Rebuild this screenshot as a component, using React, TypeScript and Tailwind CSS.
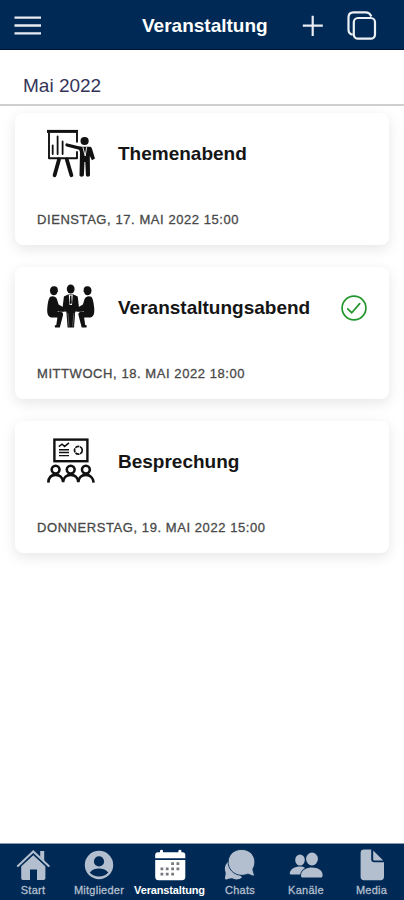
import type { ReactNode } from "react";

const PresentationIcon = () => (
  <svg width="48" height="50" viewBox="0 0 48 50" fill="none" stroke="#111" strokeLinecap="round" strokeLinejoin="round">
    <path d="M0 2.4H31" strokeWidth="3" strokeLinecap="butt" />
    <path d="M2 3.5V29.2H30V22.3M30 3.5V13.5" strokeWidth="1.9" strokeLinecap="butt" />
    <path d="M5.7 16.5V25M10.6 7.5V25M15.6 12.5V25" strokeWidth="1.8" />
    <path d="M12 30.5L7.6 46.3M19.8 30.5L24.4 46.3" strokeWidth="3.8" />
    <path d="M20 16L34.5 19.6" strokeWidth="3.3" />
    <circle cx="37.6" cy="12" r="4.1" fill="#111" stroke="none" />
    <path d="M31 17.7H42.5C43.8 17.7 44.5 18.3 44.9 19.5L48 29.5L45 31.2L42.8 27L43 46.3C43 48.2 38.9 48.2 38.9 46.3L38.3 33H37.5L36.9 46.3C36.8 48.2 32.4 48.2 32.5 46.3L33 23Z" fill="#111" stroke="none" />
    <path d="M36 18.5L38.2 27L39.6 18.5" stroke="#fff" strokeWidth="0.9" />
  </svg>
);

const SeatedPerson = () => (
  <>
    <path d="M6.7 3.3C9.8 3 11.1 5.1 10.8 7.4C11.2 8.5 10.9 8.8 10.4 9C10 11.2 8.7 12.3 6.8 12.3C4.2 12.3 3 9.8 3 7.6C3 4.9 4.5 3.4 6.7 3.3Z" />
    <path d="M3.3 13.7C5.8 12.5 8.8 13.3 9.8 15.8L11.6 21.4L18 25.3L16.8 28.4H10.3L11 29H14.2C16 29.2 16.5 31 15.8 33L12.8 44.5H8L7.7 42.6L9.3 42L10.4 34.4H4C.3 33.6 -.2 29.5 .4 24C.9 19 1.8 14.9 3.3 13.7Z" />
  </>
);

const MeetingIcon = () => (
  <svg width="48" height="50" viewBox="0 0 48 50" fill="#111">
    <SeatedPerson />
    <g transform="translate(47.5 0) scale(-1 1)">
      <SeatedPerson />
    </g>
    <ellipse cx="23.7" cy="6" rx="3.9" ry="4.6" />
    <path d="M21 11.4H26.5L30.7 13.5L32 24.5L28.3 27.5H19L15.6 24.5L16.9 13.5Z" />
    <path d="M12 26.2H35.5V28.6H12Z" />
    <path d="M19.3 28L20.6 44.6H27L28.3 28Z" />
    <path d="M21.8 12L22.5 22H25L25.7 12Z" fill="#fff" />
    <path d="M23.1 12.4H24.4L24.8 20L23.7 21.5L22.7 20Z" />
    <path d="M20.8 30L22.1 43.5M26.9 30L25.6 43.5" stroke="#888" strokeWidth=".6" />
  </svg>
);

const BriefingIcon = () => (
  <svg width="48" height="50" viewBox="0 0 48 50" fill="none" stroke="#111">
    <rect x="7.4" y="2.6" width="33" height="21.6" strokeWidth="2.4" />
    <path d="M11.8 9.6L15 7.2L17.6 9.4L22 5.8" strokeWidth="1.5" />
    <path d="M12 12.7H22M12 15.5H22M12 18.6H22" strokeWidth="1.4" />
    <circle cx="31.4" cy="13.3" r="3.9" strokeWidth="1.7" strokeDasharray="4.2 .7" />
    <g strokeWidth="2.6">
      <circle cx="8.6" cy="32.6" r="3.9" />
      <circle cx="23.7" cy="32.6" r="3.9" />
      <circle cx="38.9" cy="32.6" r="3.9" />
      <path d="M1.3 45.6C1.6 40.5 4.6 37.9 8.6 37.9S15.8 40.5 16.1 45.2C16.4 40.5 19.7 37.9 23.7 37.9S31 40.5 31.3 45.2C31.6 40.5 34.9 37.9 38.9 37.9S46.2 40.5 46.6 45.6" />
    </g>
  </svg>
);

const CheckIcon = () => (
  <svg width="26" height="26" viewBox="0 0 26 26" fill="none" stroke="#23962d" strokeWidth="1.7">
    <circle cx="13" cy="13" r="11.9" />
    <path d="M6.7 13.8L10.7 17.7L18.7 8.6" strokeLinecap="round" />
  </svg>
);

type EventItem = { title: string; date: string; icon: ReactNode; confirmed?: boolean };

const events: EventItem[] = [
  { title: "Themenabend", date: "DIENSTAG, 17. MAI 2022 15:00", icon: <PresentationIcon /> },
  { title: "Veranstaltungsabend", date: "MITTWOCH, 18. MAI 2022 18:00", icon: <MeetingIcon />, confirmed: true },
  { title: "Besprechung", date: "DONNERSTAG, 19. MAI 2022 15:00", icon: <BriefingIcon /> },
];

const tabs: { label: string; icon: ReactNode; active?: boolean }[] = [
  {
    label: "Start",
    icon: (
      <>
        <path d="M5.2 17L17.3 6L29.4 17V29.2Q29.4 31 27.6 31H21V20.5H14V31H7Q5.2 31 5.2 29.2Z" />
        <path d="M1.9 17L17.3 2.4L32.7 17" fill="none" stroke="currentColor" strokeWidth="2" strokeLinecap="round" />
        <path d="M24.2 2H28.2V12L24.2 8.2Z" />
        <path d="M4.3 17.8L17.3 5.7L30.3 17.8" fill="none" stroke="#002a55" strokeWidth=".8" />
      </>
    ),
  },
  {
    label: "Mitglieder",
    icon: (
      <>
        <circle cx="17" cy="16" r="14.2" />
        <circle cx="17" cy="12.4" r="5.1" fill="#002a55" />
        <path d="M7.7 23.4C10.4 20 13.6 19.4 17 19.4S23.6 20 26.3 23.4C24.1 26 20.8 27.4 17 27.4S9.9 26 7.7 23.4Z" fill="#002a55" />
      </>
    ),
  },
  {
    label: "Veranstaltung",
    active: true,
    icon: (
      <>
        <path d="M2.2 9.3V6Q2.2 3.2 5 3.2H7V1.5Q8.5-.2 10 1.5V3.2H25.4V1.5Q26.9-.2 28.4 1.5V3.2H29.5Q32.3 3.2 32.3 6V9.3Z" />
        <path d="M2.2 11.1H32.3V27.7Q32.3 31.2 28.8 31.2H5.7Q2.2 31.2 2.2 27.7Z" />
        <path d="M18.2 13.2h2.8v2.8h-2.8zM23.5 13.2h2.8v2.8h-2.8zM7.5 18.5h2.8v2.8H7.5zM12.8 18.5h2.8v2.8h-2.8zM18.2 18.5h2.8v2.8h-2.8zM23.5 18.5h2.8v2.8h-2.8zM7.5 23.7h2.8v2.8H7.5zM12.8 23.7h2.8v2.8h-2.8zM18.2 23.7h2.8v2.8h-2.8z" fill="#77797e" />
      </>
    ),
  },
  {
    label: "Chats",
    icon: (
      <>
        <path d="M5.5 12.5C2.2 15 1 19 2.6 23.2C3.2 25 1.3 29.4 2.4 30.3C3.5 31.1 7.2 28.8 9 29.3C12.5 31.2 16.5 30.5 19 28.5L13 21Z" />
        <path d="M19 .4C9.5.2 4.4 7.5 5.2 14.6C6.2 22.5 13.7 27.5 21.5 26.1C23 25.6 24.2 25 25.2 25.2L29.8 26.9C31.2 27.2 31.5 26.4 31.2 25.4L30 21.3C29.6 19.8 30.8 18.4 31.3 17C33.8 8.5 28 .6 19 .4Z" stroke="#002a55" strokeWidth=".9" />
      </>
    ),
  },
  {
    label: "Kanäle",
    icon: (
      <>
        <ellipse cx="11" cy="11" rx="4.8" ry="5.6" />
        <path d="M.7 24.7C1.2 19.5 6 17.5 11 17.5C14 17.5 15.5 18.2 16 19C13 21 11.5 22.8 11.2 25.6H1.7Z" />
        <ellipse cx="23" cy="10" rx="5.9" ry="6.4" />
        <path d="M12.2 27.8C10.9 21.5 17.2 18.5 23.2 18.5S35 22 33.3 27.8Q33.1 28.4 32 28.4H13.4Q12.4 28.4 12.2 27.8Z" />
      </>
    ),
  },
  {
    label: "Media",
    icon: (
      <>
        <path d="M9 .6H16.2V10.2Q16.2 13.2 19.2 13.2H29V27.8Q29 31.2 25.6 31.2H9Q5.6 31.2 5.6 27.8V4Q5.6 .6 9 .6Z" />
        <path d="M18.2 1.5L28.2 11.6H19.3Q18.2 11.6 18.2 10.5Z" />
      </>
    ),
  },
];

export default function App() {
  return (
    <div className="flex h-[900px] w-[404px] flex-col overflow-hidden bg-white font-['Liberation_Sans',Arial,sans-serif]">
      <header className="flex h-[50px] shrink-0 items-center border-b border-[#001333] bg-[#002a55] text-white">
        <button aria-label="Menü" className="ml-[14px]">
          <svg width="28" height="22" viewBox="0 0 28 22" stroke="#e9ecf2" strokeWidth="2.3">
            <path d="M.5 3.6H27M.5 11.5H27M.5 19.4H27" />
          </svg>
        </button>
        <h1 className="ml-[100px] w-[127px] pt-0.5 text-[19px] leading-6 font-bold whitespace-nowrap">Veranstaltung</h1>
        <button aria-label="Hinzufügen" className="ml-[33px]">
          <svg width="22" height="22" viewBox="0 0 22 22" stroke="#e9ecf2" strokeWidth="2.2">
            <path d="M.8 11.7H20.8M10.7 1.7V21.9" />
          </svg>
        </button>
        <button aria-label="Kopieren" className="ml-[23px]">
          <svg width="30" height="30" viewBox="0 0 30 30" fill="none" stroke="#edf0f4" strokeWidth="2.2">
            <rect x="6.8" y="8" width="21.2" height="20.7" rx="4.2" />
            <path d="M5.7 24.8C3 24 1.5 22.2 1.5 19.7V7.4Q1.5 2.4 6.5 2.4H18.5C21.5 2.4 23.3 3.8 24.3 6.5" />
          </svg>
        </button>
      </header>

      <main className="flex min-h-0 flex-1 flex-col">
        <div className="flex h-14 shrink-0 items-end border-b-2 border-[#cfcfcf] pb-[6px] pl-[23px]">
          <h2 className="text-[19px] leading-6 text-[#34345a]">Mai 2022</h2>
        </div>
        <div className="flex flex-col gap-[22px] px-[15px] pt-[7px]">
          {events.map((event) => (
            <article key={event.title} className="h-[132px] rounded-lg bg-white px-[22px] pt-4 shadow-[0_4px_14px_rgba(0,0,0,0.1)]">
              <div className="flex h-[50px] items-center pl-[10px]">
                {event.icon}
                <h3 className="ml-[23px] flex-1 text-[19px] leading-6 font-bold whitespace-nowrap text-[#151515]">{event.title}</h3>
                {event.confirmed && <CheckIcon />}
              </div>
              <p className="mt-8 text-[13px] leading-[18px] tracking-[0.57px] text-[#484848] [-webkit-text-stroke:0.3px_#484848]">
                {event.date}
              </p>
            </article>
          ))}
        </div>
      </main>

      <nav className="grid h-[57px] shrink-0 grid-cols-[66px_66px_75px_66px_66px_65px] border-t border-[#8b98ad] bg-[#002a55] pt-[5px]">
        {tabs.map((tab) => (
          <button key={tab.label} className={`flex flex-col items-center ${tab.active ? "text-white" : "text-[#b3bfce]"}`}>
            <svg width="34" height="32" viewBox="0 0 34 32" fill="currentColor">
              {tab.icon}
            </svg>
            <span
              className={`mt-[3px] text-[11px] leading-3 whitespace-nowrap ${
                tab.active ? "font-bold tracking-[-0.15px]" : "tracking-[0.25px] [-webkit-text-stroke:0.3px_#b3bfce]"
              }`}
            >
              {tab.label}
            </span>
          </button>
        ))}
      </nav>
    </div>
  );
}
